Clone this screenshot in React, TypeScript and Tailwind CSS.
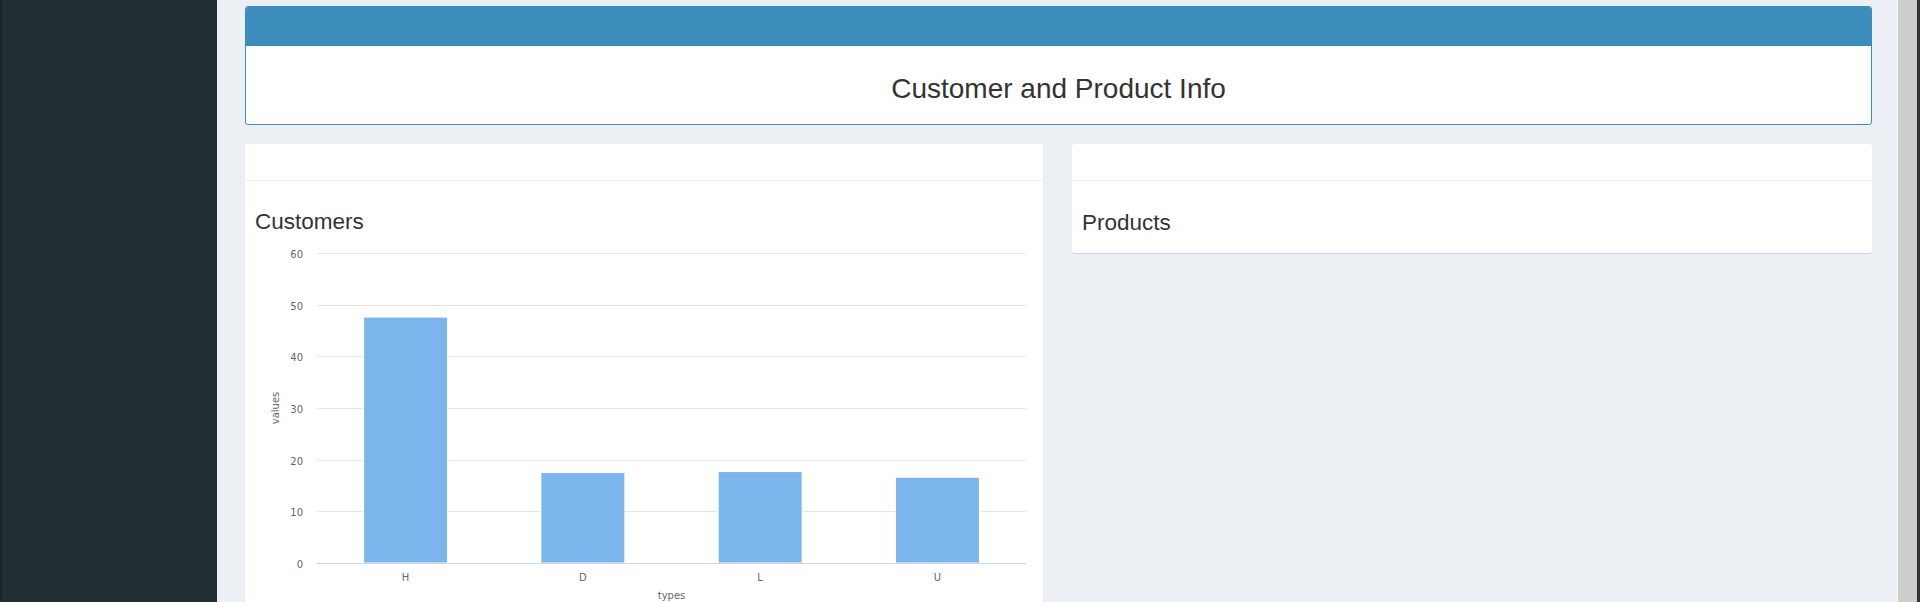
import React from "react";

const ticks = [0, 10, 20, 30, 40, 50, 60];
const bars = [
  { label: "H", value: 47.6 },
  { label: "D", value: 17.5 },
  { label: "L", value: 17.7 },
  { label: "U", value: 16.6 },
];

// chart geometry (svg coords)
const plotLeft = 62;
const plotRight = 771;
const zeroY = 328;
const unit = 310 / 60;
const band = (plotRight - plotLeft) / bars.length;

const CustomerChart = () => {
  return (
    <svg width="778" height="380" className="block" style={{ fontFamily: '"DejaVu Sans", Verdana, sans-serif' }}>
      {ticks.map((t) => {
        const y = Math.round(zeroY - t * unit) + 0.5;
        return (
          <g key={t}>
            {t !== 0 && <line x1={plotLeft} x2={plotRight} y1={y} y2={y} stroke="#e6e6e6" strokeWidth="1" />}
            <text x="48" y={y + 4} textAnchor="end" fontSize="10" fill="#666666">
              {t}
            </text>
          </g>
        );
      })}
      {bars.map((b, i) => {
        const cx = plotLeft + band * i + band / 2;
        const h = b.value * unit;
        return (
          <g key={b.label}>
            <rect x={cx - 42} y={zeroY - h} width="84" height={h} fill="#7cb5ec" stroke="#ffffff" strokeWidth="1" />
            <text x={cx} y="346" textAnchor="middle" fontSize="10" fill="#666666">
              {b.label}
            </text>
          </g>
        );
      })}
      <line x1={plotLeft} x2={plotRight} y1={zeroY + 0.5} y2={zeroY + 0.5} stroke="#ccd6eb" strokeWidth="1" />
      <text x="416.5" y="364" textAnchor="middle" fontSize="10" fill="#666666">
        types
      </text>
      <text x="0" y="0" textAnchor="middle" fontSize="10" fill="#666666" transform="translate(24 173) rotate(-90)">
        values
      </text>
    </svg>
  );
};

export default function App() {
  return (
    <div className="flex h-[602px] w-[1920px] overflow-hidden bg-[#ecf0f5]" style={{ fontFamily: '"Liberation Sans", Arial, sans-serif' }}>
      <div className="w-[217px] shrink-0 border-l-2 border-[#1e2326] bg-[#222d32]" />

      <div className="flex-1 pl-[28px] pr-[25px] pt-[6px]">
        <div className="overflow-hidden rounded-[3px] border border-[#3c8dbc] bg-white">
          <div className="h-[39px] bg-[#3c8dbc]" />
          <div className="flex h-[78px] items-center justify-center pt-[8px]">
            <h1 className="text-[28px] leading-[30px] text-[#333]">Customer and Product Info</h1>
          </div>
        </div>

        <div className="mt-[19px] flex items-start gap-[29px]">
          <div className="w-[798px] rounded-[3px] bg-white shadow-[0_1px_1px_rgba(0,0,0,0.1)]">
            <div className="h-[37px] border-b border-[#f0f0f0]" />
            <div className="px-[10px]">
              <h3 className="mt-[28px] text-[22.5px] leading-[26px] text-[#333]">Customers</h3>
              <CustomerChart />
            </div>
          </div>

          <div className="w-[800px] rounded-[3px] bg-white shadow-[0_1px_1px_rgba(0,0,0,0.12)]">
            <div className="h-[37px] border-b border-[#f0f0f0]" />
            <div className="px-[10px] pb-[17px]">
              <h3 className="mt-[29px] text-[22.5px] leading-[26px] text-[#333]">Products</h3>
            </div>
          </div>
        </div>
      </div>

      <div className="w-[1px] shrink-0 bg-[#f5f5f5]" />
      <div className="w-[19px] shrink-0 bg-[#cdcdcd]" />
      <div className="w-[3px] shrink-0 bg-[#333]" />
    </div>
  );
}
